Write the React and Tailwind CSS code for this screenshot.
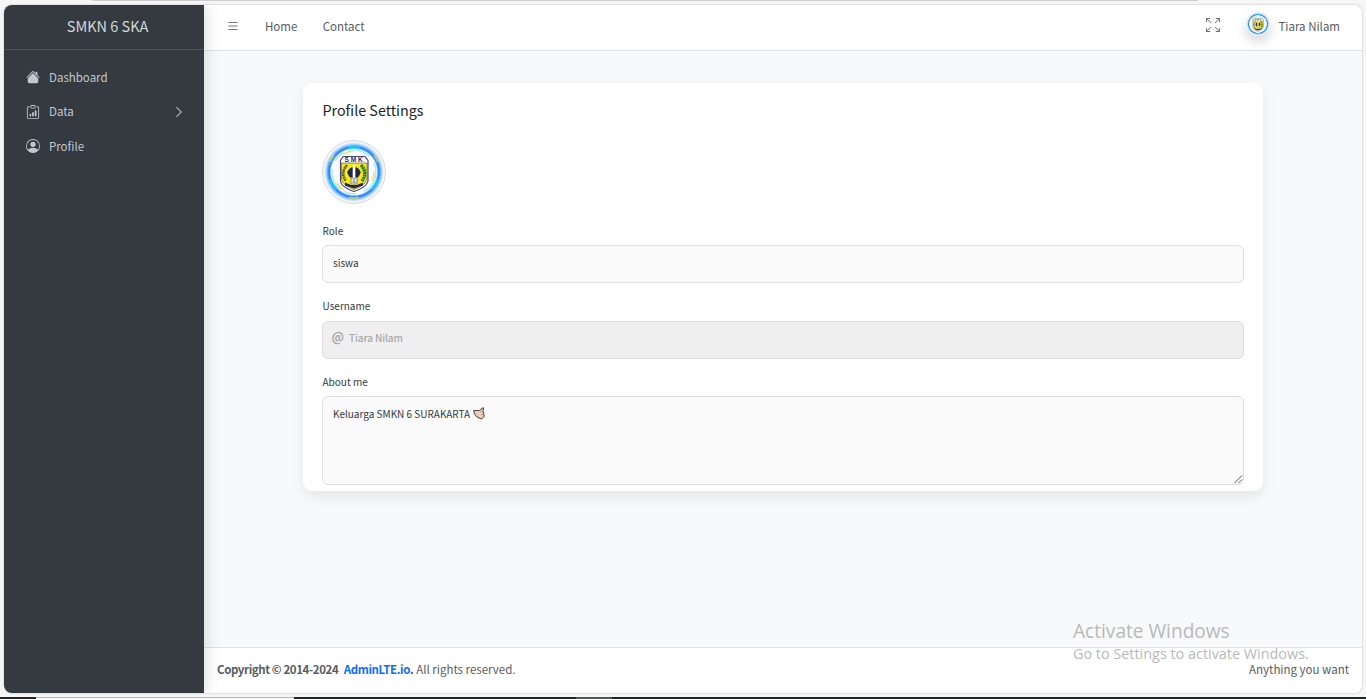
import { BsHouseFill, BsClipboardData, BsPersonCircle, BsChevronRight, BsList, BsArrowsFullscreen } from "react-icons/bs";

function Emblem({ className }) {
  return (
    <svg viewBox="0 0 64 64" className={className}>
      <defs>
        <radialGradient id="halo">
          <stop offset="0.72" stopColor="#fff" />
          <stop offset="0.77" stopColor="#3b8ff8" />
          <stop offset="0.8" stopColor="#2684f8" />
          <stop offset="0.86" stopColor="#8fc4fb" />
          <stop offset="0.93" stopColor="#eef3f8" />
          <stop offset="1" stopColor="#f7f7f7" />
        </radialGradient>
      </defs>
      <circle cx="32" cy="32" r="31.5" fill="url(#halo)" stroke="#d8d9da" />
      <g fill="none" stroke="#12d3fb" strokeWidth="2.5" opacity=".8">
        <path d="M26 7.700A25 25 0 0 1 38 7.700" />
        <path d="M8 39A25 25 0 0 0 14 49" />
        <path d="M56 39A25 25 0 0 1 50 49" />
      </g>
      <g fill="none" stroke="#c9d36c" strokeWidth="2.2" opacity=".75">
        <path d="M27 57.500A26 26 0 0 0 37 57.500" />
        <path d="M8 22A26 26 0 0 1 12 15" />
        <path d="M56 22A26 26 0 0 0 52 15" />
      </g>
      <circle cx="32" cy="32" r="22" fill="#fbfafc" stroke="#a6e8f7" strokeWidth="1.4" strokeDasharray="24 8 13 3" />
      <g fill="none" stroke="#f2e46b" strokeWidth="1.5">
        <path d="M22 14Q26 11.500 31 11.500" />
        <path d="M52 31Q52 37 50 41" />
        <path d="M15 43Q18 48 22 50" />
      </g>
      <path d="M21 16.500H43L46 20.500V41Q45 47 32 51.500Q19 47 18.500 41V20.500Z" fill="#fff" stroke="#4b4c76" strokeWidth="1.2" />
      <path d="M19.500 23H45V40Q42 46 32 49.500Q22 46 19.500 40Z" fill="#f2ea18" stroke="#4b4c56" strokeWidth=".6" />
      <path d="M39 25Q46 33 40 41" fill="none" stroke="#2e7a3c" strokeWidth="3.4" strokeDasharray="2.200 .4" />
      <path d="M25 25Q18 33 24 41" fill="none" stroke="#62602c" strokeWidth="2.6" strokeDasharray="2 .5" />
      <path d="M30 27Q22 31 28 37.500H31V28ZM34 27Q42 31 36 37.500H33V28Z" fill="#25264c" />
      <path d="M32 24L33.300 28V38H30.700V28Z" fill="#fff" />
      <rect x="29" y="38" width="6" height="6" fill="#eee" stroke="#77777e" strokeWidth=".8" />
      <path d="M31 39.500H33M31 41H33V42.500H31Z" fill="none" stroke="#77777e" strokeWidth=".7" />
      <path d="M23 42.500L29 45H35L41 42.500V45.500L32 48.500L23 45.500Z" fill="#24264b" />
      <text x="32.500" y="22.200" textAnchor="middle" className="fill-[#29295e] font-['Liberation_Sans'] text-[6.500px] font-bold" letterSpacing="1.8">SMK</text>
    </svg>
  );
}

function NavItem({ icon: Icon, label, more }) {
  return (
    <a className="flex h-[34.500px] items-center pl-[22px] pr-[19px] text-[#c2c7d0]">
      <Icon className="size-[14px]" />
      <span className="ml-[9px] flex-1 text-[11.500px]">{label}</span>
      {more && <BsChevronRight className="size-[12px] stroke-[0.5]" />}
    </a>
  );
}

const label = "flex h-[15px] items-center pl-[0.500px] text-[10px] text-[#343a40]";
const field = "w-full rounded-[6px] border border-[#dfdfdf] bg-[#fafafa] px-[10px] text-[10px] text-[#343a40]";

export default function App() {
  return (
    <div className="relative flex h-[699px] w-[1366px] flex-col overflow-hidden bg-[#f6f6f6] font-['Noto_Sans_CJK_SC',sans-serif] leading-none">
      <div className="ml-[92px] h-px w-[1106px] shrink-0 bg-[#cecece]" />
      <div className="mx-[4px] mt-[4px] flex h-[688px] shrink-0 overflow-hidden rounded-[8px] bg-[#f8f9fa] shadow-[0_0_2px_rgba(0,0,0,0.3)]">
        <aside className="relative z-10 w-[200px] shrink-0 bg-[#343a40] shadow-[0_0_16px_rgba(0,0,0,0.16)]">
          <div className="flex h-[45px] items-center justify-center border-b border-[#4b545c] pb-[2px] pl-[7px] text-[14.500px] text-[#d3d6d9]">SMKN 6 SKA</div>
          <nav className="pt-[10.200px]">
            <NavItem icon={BsHouseFill} label="Dashboard" />
            <NavItem icon={BsClipboardData} label="Data" more />
            <NavItem icon={BsPersonCircle} label="Profile" />
          </nav>
        </aside>
        <div className="flex min-w-0 flex-1 flex-col">
          <header className="flex h-[46px] shrink-0 items-center border-b border-[#dee2e6] bg-white pb-[2px] pl-[22px] pr-[22px] text-[11.500px] text-[#595c5f]">
            <BsList className="mb-[2px] size-[14px] text-[#77797b]" />
            <span className="ml-[25px]">Home</span>
            <span className="ml-[25.300px]">Contact</span>
            <div className="ml-auto flex items-center">
              <BsArrowsFullscreen className="mb-[3px] size-[14px] text-[#6c6e70]" />
              <Emblem className="mb-[5px] ml-[26px] size-[24px] rounded-full shadow-[0_6px_12px_rgba(0,0,0,0.16)]" />
              <span className="ml-[8px]">Tiara Nilam</span>
            </div>
          </header>
          <main className="flex-1 pl-[99px] pt-[32px]">
            <section className="flex h-[408px] w-[960px] flex-col rounded-[9px] bg-white px-[19px] pt-[17px] shadow-[0_6px_14px_rgba(0,0,0,0.08)]">
              <h1 className="flex h-[20px] items-center pl-[0.500px] text-[14.300px] text-[#212529]">Profile Settings</h1>
              <Emblem className="mt-[20px] size-[64px]" />
              <div className="mt-[19px]"><div className={label}>Role</div></div>
              <div className={field + " mt-[7px] flex h-[38px] shrink-0 items-center pb-[2px]"}>siswa</div>
              <div className="mt-[15px]"><div className={label}>Username</div></div>
              <div className="mt-[8px] flex h-[38px] w-full shrink-0 items-center rounded-[6px] border border-[#dfdfdf] bg-[#efefef] px-[8.500px] pb-[5px] text-[10px] font-medium tracking-[-0.1px] text-[#a9a9a9]">
                <span className="w-[17.500px] text-[12.500px] font-bold">@</span>Tiara Nilam
              </div>
              <div className="mt-[15px]"><div className={label}>About me</div></div>
              <div className={field + " mt-[7px] flex h-[89px] shrink-0 flex-col justify-between pt-[10px]"}>
                <div className="flex h-[13px] items-center">
                  <span>Keluarga SMKN 6 SURAKARTA</span>
                  <svg viewBox="0 0 12 13" className="ml-[3px] h-[13px] w-[12px]">
                    <path d="M.7 3.500L6.500 3.500L9 1.200L10.700 .8L10 4L11.300 9.500L8.500 12L4 10L1.500 7Z" fill="#efcdb9" stroke="#383330" strokeWidth=".9" />
                    <path d="M7 5L9 4M8 8L10 7" stroke="#a38576" strokeWidth=".7" />
                  </svg>
                </div>
                <svg viewBox="0 0 9 9" className="-mr-[10px] size-[9px] self-end">
                  <path d="M.5 8L8 .5M4.500 8L8 4.500" stroke="#444" strokeWidth="0.9" />
                </svg>
              </div>
            </section>
          </main>
          <footer className="flex h-[46px] shrink-0 items-center border-t border-[#dee2e6] bg-white px-[13px] pb-[2px] text-[11.500px] text-[#595c5f]">
            <span className="font-bold tracking-[-0.400px]">Copyright © 2014-2024</span>
            <span className="ml-[5.500px] font-bold tracking-[-0.400px] text-[#0d6efd]">AdminLTE.io</span>
            <span className="font-bold">.</span>
            <span className="ml-[2.500px]">All rights reserved.</span>
            <span className="ml-auto">Anything you want</span>
          </footer>
        </div>
      </div>
      <div className="mt-auto flex h-[2px] shrink-0 bg-[#242626]">
        <div className="ml-[36px] h-[2px] w-[258px] border-t border-[#b9b9b9] bg-[#f4f4f4]" />
        <div className="ml-[282px] w-[36px] bg-[#555856]" />
      </div>
      <div className="absolute left-[1073px] top-[620px] z-20 whitespace-nowrap font-['Open_Sans',sans-serif] text-[#b9b9b9]">
        <div className="h-[24px] text-[19.100px] leading-[22px]">Activate Windows</div>
        <div className="text-[14.400px] leading-[20px]">Go to Settings to activate Windows.</div>
      </div>
    </div>
  );
}
